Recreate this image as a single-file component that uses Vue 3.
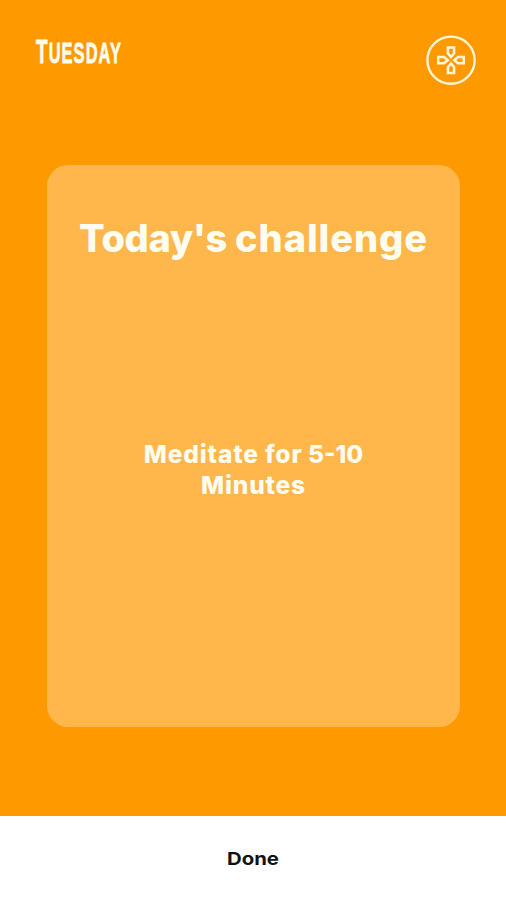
<script setup>
const day = 'Tuesday'
const turns = [0, 90, 180, 270]
</script>

<template>
  <div class="screen">
    <header class="top">
      <h2 class="day">{{ day }}</h2>
      <button class="pad" aria-label="Games">
        <svg viewBox="0 0 50 50" width="50" height="50" fill="none" stroke="#fff6da">
          <circle cx="25" cy="25.2" r="23.6" stroke-width="2.4" />
          <g v-for="a in turns" :key="a" :transform="`translate(0 .2) rotate(${a} 25 25)`">
            <path d="M21.9 12.2h6.2v5.8L25 21.8l-3.1-3.8z" stroke-width="2.5" />
          </g>
        </svg>
      </button>
    </header>
    <main class="card">
      <h1 class="title"><span class="tight">Today's</span> <span class="loose">challenge</span></h1>
      <p class="task">
        <span class="line"><span class="wide">Meditate for</span> 5-10</span>
        <span class="line wide">Minutes</span>
      </p>
    </main>
    <button class="done"><span>Done</span></button>
  </div>
</template>

<style>
body { margin: 0; background: #fe9900; }
</style>

<style scoped>
.screen {
  display: flex;
  flex-direction: column;
  width: 506px;
  height: 900px;
  overflow: hidden;
  background: #fe9900;
  color: #fffdf0;
  font-family: Inter, "Open Sans", sans-serif;
}
button { border: 0; padding: 0; background: none; font: inherit; }
.top {
  display: flex;
  justify-content: space-between;
  align-items: flex-start;
  box-sizing: border-box;
  height: 165px;
  padding: 35px 30px 0 36px;
}
.day {
  margin: -1px 0 0;
  font: 700 29.5px/34px "Liberation Sans", sans-serif;
  text-transform: uppercase;
  letter-spacing: 2px;
  -webkit-text-stroke: .8px #fffdf0;
  transform: scaleX(.555);
  transform-origin: 0 50%;
}
.day::first-letter { font-size: 34px; }
.pad { width: 50px; height: 50px; }
.pad svg { display: block; }
.card {
  display: flex;
  flex-direction: column;
  align-items: center;
  box-sizing: border-box;
  width: 413px;
  height: 562px;
  margin-left: 47px;
  border-radius: 21px;
  background: #ffb64b;
}
.title {
  margin: 49px 0 0;
  font-size: 38px;
  line-height: 48px;
  font-weight: 800;
  white-space: nowrap;
}
.tight { letter-spacing: -.4px; }
.loose { letter-spacing: .9px; }
.line { display: block; }
.task {
  margin: 177px 0 0;
  font-size: 24.5px;
  line-height: 31px;
  font-weight: 800;
  text-align: center;
  white-space: nowrap;
}
.wide { letter-spacing: .85px; }
.done {
  display: flex;
  justify-content: center;
  align-items: center;
  height: 84px;
  margin-top: auto;
  background: #fff;
  color: #111;
  font-size: 18px;
  font-weight: 700;
}
.done span { transform: scaleX(1.13); }
</style>
